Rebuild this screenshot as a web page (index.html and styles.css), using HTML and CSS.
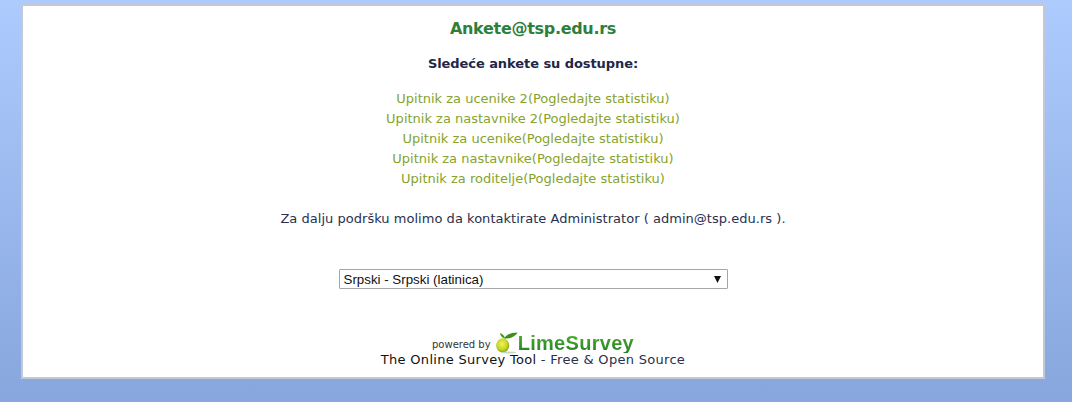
FILE: index.html
```html
<!DOCTYPE html>
<html lang="sr">
<head>
<meta charset="utf-8">
<title>Ankete@tsp.edu.rs</title>
<link rel="stylesheet" href="styles.css">
</head>
<body>
<main class="card">
  <h1 class="site-title">Ankete@tsp.edu.rs</h1>
  <p class="lead">Sledeće ankete su dostupne:</p>
  <ul class="survey-list">
    <li><a href="#">Upitnik za ucenike 2(Pogledajte statistiku)</a></li>
    <li><a href="#">Upitnik za nastavnike 2(Pogledajte statistiku)</a></li>
    <li><a href="#">Upitnik za ucenike(Pogledajte statistiku)</a></li>
    <li><a href="#">Upitnik za nastavnike(Pogledajte statistiku)</a></li>
    <li><a href="#">Upitnik za roditelje(Pogledajte statistiku)</a></li>
  </ul>
  <p class="contact">Za dalju podršku molimo da kontaktirate Administrator ( admin@tsp.edu.rs ).</p>
  <div class="lang-row">
    <div class="lang-select">
      <span>Srpski - Srpski (latinica)</span>
      <svg class="lang-arrow" width="7" height="7" viewBox="0 0 7 7"><path d="M0 0H7L3.5 7Z" fill="#111"/></svg>
    </div>
  </div>
  <footer class="footer">
    <div class="powered">
      <span class="powered-by">powered by</span>
      <svg class="lime" width="22" height="22" viewBox="0 0 22 22">
        <defs>
          <radialGradient id="limeFruit" cx="0.45" cy="0.4" r="0.65">
            <stop offset="0" stop-color="#f2f25a"/>
            <stop offset="0.6" stop-color="#c6d625"/>
            <stop offset="1" stop-color="#6f8f14"/>
          </radialGradient>
        </defs>
        <path d="M9 6.500C8.500 4 7 2 4 1C4.300 3.800 6 6 9 6.500Z" fill="#3f9420"/>
        <path d="M8 6.500C10 2.500 15 0.500 21.500 0.500C19.500 4.500 14 7 8 6.500Z" fill="#3d8f18"/>
        <ellipse cx="6.700" cy="13.500" rx="6.500" ry="7.200" fill="url(#limeFruit)"/>
        <ellipse cx="13" cy="20.500" rx="7" ry="1" fill="#c9d8c2"/>
      </svg>
      <span class="brand">LimeSurvey</span>
    </div>
    <div class="tagline"><span class="tagline-dark">The Online Survey Tool</span> - Free &amp; Open Source</div>
  </footer>
</main>
</body>
</html>
```
FILE: styles.css
```css
html, body {
  margin: 0;
  height: 402px;
  overflow: hidden;
}
body {
  background: linear-gradient(#adcbfd, #87a6dd);
  padding: 4px 27px 0 21px;
  box-sizing: border-box;
  font-family: "DejaVu Sans", Verdana, sans-serif;
  font-size: 13px;
  color: #29304f;
}
.card {
  box-sizing: border-box;
  height: 375px;
  background: #fff;
  border: 2px solid #c2c9d4;
  text-align: center;
  display: flex;
  flex-direction: column;
  align-items: center;
}
.site-title {
  margin: 13px 0 0;
  font-size: 16px;
  line-height: 20px;
  font-weight: bold;
  letter-spacing: -0.3px;
  color: #2f7f3b;
}
.lead {
  margin: 17px 0 0;
  font-weight: bold;
  font-size: 13px;
  line-height: 16px;
  letter-spacing: -0.07px;
  color: #1f2647;
}
.survey-list {
  list-style: none;
  margin: 17px 0 0;
  padding: 0;
  line-height: 20px;
}
.survey-list a {
  color: #86a32d;
  text-decoration: none;
}
.contact {
  margin: 20px 0 0;
  line-height: 20px;
  letter-spacing: 0.03px;
}
.lang-row {
  margin-top: 40px;
}
.lang-select {
  box-sizing: border-box;
  width: 389px;
  height: 20px;
  display: flex;
  align-items: center;
  justify-content: space-between;
  padding: 0 5px 0 4px;
  border: 1px solid #a6a6a6;
  border-radius: 1px;
  font-family: "Liberation Sans", Arial, sans-serif;
  font-size: 13.33px;
  color: #111;
  text-align: left;
}
.lang-arrow {
  margin-right: 1px;
}
.footer {
  margin-top: 44px;
}
.powered {
  display: flex;
  justify-content: center;
  align-items: flex-end;
  height: 20px;
}
.powered-by {
  font-size: 10px;
  line-height: 16px;
  color: #333;
  margin: 0 5px 0 0;
}
.lime {
  flex: none;
  margin-bottom: -1px;
}
.brand {
  font-family: "Liberation Sans", Arial, sans-serif;
  font-weight: bold;
  font-size: 20px;
  line-height: 20px;
  letter-spacing: 0.3px;
  background: linear-gradient(#4fb02a, #25802a);
  -webkit-background-clip: text;
  background-clip: text;
  color: transparent;
}
.tagline {
  margin-top: -2px;
  line-height: 18px;
  letter-spacing: 0.3px;
  color: #29304f;
}
.tagline-dark {
  color: #111;
}
```
